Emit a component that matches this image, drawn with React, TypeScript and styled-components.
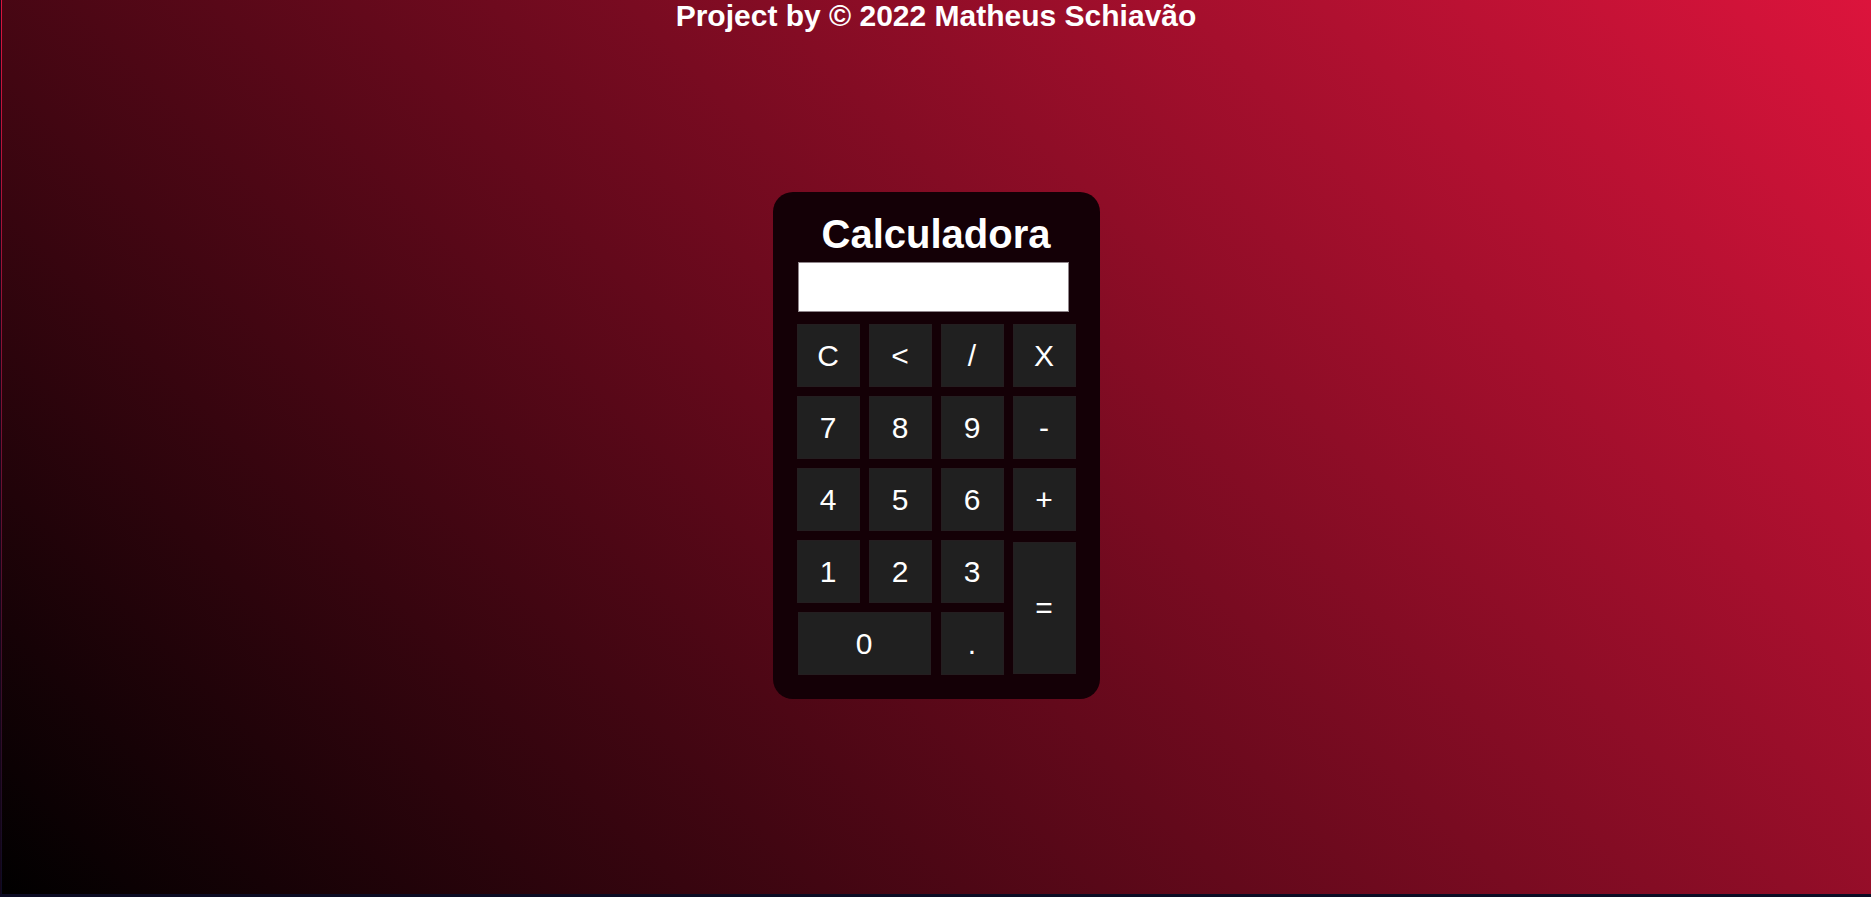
import React from "react";
import styled, { createGlobalStyle } from "styled-components";

const GlobalStyle = createGlobalStyle`
  html, body {
    margin: 0;
    padding: 0;
  }
  html {
    background: #0c0c24;
  }
  body {
    font-family: "Liberation Sans", Arial, sans-serif;
  }
`;

const Page = styled.div`
  box-sizing: border-box;
  height: calc(100vh - 3px);
  display: flex;
  flex-direction: column;
  align-items: center;
  border-left: 1px solid #14061a;
  background:
    linear-gradient(to bottom, #dc143c, #0c0c24) 0 0 / 1px 100% no-repeat,
    linear-gradient(45deg, #000000, #dc143c);
`;

const Credit = styled.h1`
  margin: 0;
  font-size: 30px;
  font-weight: 700;
  line-height: 32px;
  color: #ffffff;
  text-align: center;
`;

const Card = styled.div`
  box-sizing: border-box;
  width: 327px;
  margin-top: 160px;
  padding: 19px 24px 24px;
  border-radius: 20px;
  background: #140006;
  display: flex;
  flex-direction: column;
`;

const Title = styled.h2`
  margin: 0;
  font-size: 40px;
  font-weight: 700;
  line-height: 46px;
  color: #ffffff;
  text-align: center;
`;

const Display = styled.input`
  box-sizing: border-box;
  width: 271px;
  height: 50px;
  margin: 5px 0 12px 1px;
  border: 1px solid #8f858a;
  background: #ffffff;
  font-family: "Liberation Sans", Arial, sans-serif;
  font-size: 28px;
  text-align: right;
  padding: 0 8px;
  outline: none;
`;

const Keypad = styled.div`
  display: grid;
  grid-template-columns: repeat(4, 63px);
  grid-auto-rows: 63px;
  gap: 9px;
`;

const Key = styled.button<{ $wide?: boolean; $tall?: boolean }>`
  box-sizing: border-box;
  display: flex;
  align-items: center;
  justify-content: center;
  padding: 0;
  border: 1px solid #241e20;
  background: #202020;
  color: #ffffff;
  font-family: "Liberation Sans", Arial, sans-serif;
  font-size: 30px;
  cursor: pointer;
  grid-column: ${(p) => (p.$wide ? "span 2" : "auto")};
  grid-row: ${(p) => (p.$tall ? "span 2" : "auto")};
  ${(p) => (p.$wide ? "margin: 0 1px;" : "")}
  ${(p) => (p.$tall ? "margin: 2px 0 1px;" : "")}
`;

const keys: { label: string; wide?: boolean; tall?: boolean }[] = [
  { label: "C" },
  { label: "<" },
  { label: "/" },
  { label: "X" },
  { label: "7" },
  { label: "8" },
  { label: "9" },
  { label: "-" },
  { label: "4" },
  { label: "5" },
  { label: "6" },
  { label: "+" },
  { label: "1" },
  { label: "2" },
  { label: "3" },
  { label: "=", tall: true },
  { label: "0", wide: true },
  { label: "." },
];

export default function App() {
  return (
    <>
      <GlobalStyle />
      <Page>
        <Credit>Project by © 2022 Matheus Schiavão</Credit>
        <Card>
          <Title>Calculadora</Title>
          <Display type="text" readOnly value="" />
          <Keypad>
            {keys.map((k) => (
              <Key key={k.label} $wide={k.wide} $tall={k.tall}>
                {k.label}
              </Key>
            ))}
          </Keypad>
        </Card>
      </Page>
    </>
  );
}
